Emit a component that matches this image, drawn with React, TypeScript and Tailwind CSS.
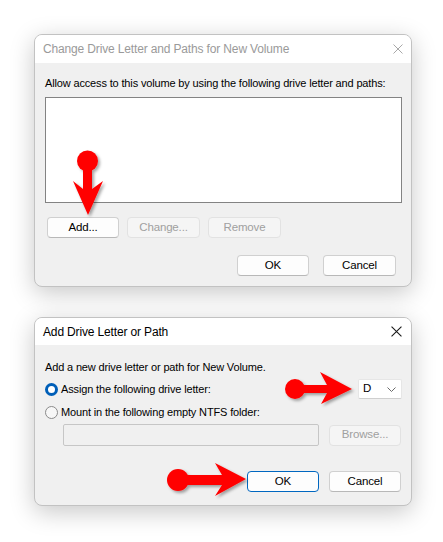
import React from 'react'

const font = { fontFamily: '"Liberation Sans", Arial, sans-serif' }

const CloseIcon = ({ color, size }: { color: string; size: number }) => (
  <svg width={size} height={size} viewBox="0 0 10 10" fill="none">
    <path d="M0.5 0.5 L9.5 9.5 M9.5 0.5 L0.5 9.5" stroke={color} strokeWidth="1" />
  </svg>
)

const Button = ({
  label,
  w = 'w-[73px]',
  disabled,
  primary,
}: {
  label: string
  w?: string
  disabled?: boolean
  primary?: boolean
}) => (
  <div
    className={
      'h-[21px] rounded-[4px] border flex items-center justify-center text-[11.5px] ' +
      w +
      ' ' +
      (disabled
        ? 'bg-[#f5f5f5] border-[#e2e2e2] text-[#a0a0a0]'
        : primary
          ? 'bg-[#fdfdfd] border-[#0067c0] text-black'
          : 'bg-[#fdfdfd] border-[#d0d0d0] border-b-[#b8b8b8] text-black')
    }
  >
    {label}
  </div>
)

const Radio = ({ checked }: { checked?: boolean }) =>
  checked ? (
    <div className="w-[13px] h-[13px] rounded-full border-[3.5px] border-[#005fb8] bg-white shrink-0" />
  ) : (
    <div className="w-[13px] h-[13px] rounded-full border border-[#8a8a8a] bg-[#f7f7f7] shrink-0" />
  )

// red pointer arrows laid over both dialogs
const Arrows = () => (
  <svg className="absolute inset-0 pointer-events-none" width="443" height="542">
    <defs>
      <filter id="sh" x="-30%" y="-30%" width="160%" height="160%">
        <feDropShadow dx="2" dy="2" stdDeviation="1.8" floodColor="#000" floodOpacity="0.35" />
      </filter>
    </defs>
    <g fill="#ff0000" filter="url(#sh)">
      <circle cx="87.5" cy="161" r="10.5" />
      <path d="M83 161 L83 189 L73 181 L88 215 L103 181 L92 189 L92 161 Z" />
      <circle cx="295" cy="389" r="10" />
      <path d="M295 385 L327 385 L320 372 L352 389 L321 404 L327 393 L295 393 Z" />
      <circle cx="178" cy="480" r="11" />
      <path d="M178 475 L222 475 L215 463 L246 479 L215 496 L222 485 L178 485 Z" />
    </g>
  </svg>
)

const App: React.FC = () => {
  return (
    <div className="relative w-[443px] h-[542px] bg-white overflow-hidden tracking-[-0.15px]" style={font}>
      <div className="pt-[34px] pl-[34px] flex flex-col gap-[30px]">
        {/* Change Drive Letter and Paths */}
        <div className="w-[378px] h-[253px] rounded-[8px] border border-[#c2c2c2] bg-[#f0f0f0] overflow-hidden shadow-[0_6px_24px_rgba(0,0,0,0.22)] flex flex-col">
          <div className="h-[28px] bg-white flex items-center justify-between pl-[8px] pr-[8px] shrink-0">
            <span className="text-[12px] text-[#9a9a9a]">Change Drive Letter and Paths for New Volume</span>
            <CloseIcon color="#a8a8a8" size={10} />
          </div>
          <div className="pl-[10px] pr-[9px] pt-[12px] flex flex-col">
            <p className="text-[11px] leading-[16px] text-black whitespace-nowrap">
              Allow access to this volume by using the following drive letter and paths:
            </p>
            <div className="mt-[6px] h-[106px] bg-white border border-[#838383]" />
            <div className="mt-[14px] ml-[2px] flex gap-[8px]">
              <Button label="Add..." w="w-[72px]" />
              <Button label="Change..." disabled />
              <Button label="Remove" disabled />
            </div>
            <div className="mt-[17px] mr-[6px] flex justify-end gap-[14px]">
              <Button label="OK" w="w-[72px]" />
              <Button label="Cancel" />
            </div>
          </div>
        </div>

        {/* Add Drive Letter or Path */}
        <div className="w-[378px] h-[189px] rounded-[8px] border border-[#c2c2c2] bg-[#f0f0f0] overflow-hidden shadow-[0_6px_24px_rgba(0,0,0,0.22)] flex flex-col">
          <div className="h-[27px] bg-white flex items-center justify-between pl-[8px] pr-[9px] shrink-0">
            <span className="text-[12px] text-black">Add Drive Letter or Path</span>
            <CloseIcon color="#1a1a1a" size={11} />
          </div>
          <div className="pl-[10px] pr-[9px] pt-[14px] flex flex-col">
            <p className="text-[11px] leading-[16px] text-black">Add a new drive letter or path for New Volume.</p>
            <div className="mt-[4px] h-[20px] flex items-center justify-between">
              <div className="flex items-center gap-[3px]">
                <Radio checked />
                <span className="text-[11px] text-black">Assign the following drive letter:</span>
              </div>
              <div className="w-[44px] h-[20px] bg-white border border-[#e6e6e6] border-b-[#cfcfcf] rounded-[2px] flex items-center justify-between pl-[4px] pr-[5px]">
                <span className="text-[11.5px] text-black">D</span>
                <svg width="9" height="5" viewBox="0 0 9 5" fill="none">
                  <path d="M0.5 0.5 L4.5 4.5 L8.5 0.5" stroke="#6a6a6a" strokeWidth="1" />
                </svg>
              </div>
            </div>
            <div className="mt-[3px] h-[20px] flex items-center gap-[3px]">
              <Radio />
              <span className="text-[11px] text-black">Mount in the following empty NTFS folder:</span>
            </div>
            <div className="mt-[2px] pl-[18px] pr-[1px] flex items-center gap-[10px]">
              <div className="w-[256px] h-[22px] border border-[#c6c6c6] rounded-[2px] bg-[#f0f0f0]" />
              <Button label="Browse..." w="w-[72px]" disabled />
            </div>
            <div className="mt-[25px] pr-[1px] flex justify-end gap-[10px]">
              <Button label="OK" w="w-[72px]" primary />
              <Button label="Cancel" w="w-[72px]" />
            </div>
          </div>
        </div>
      </div>
      <Arrows />
    </div>
  )
}

export default App
